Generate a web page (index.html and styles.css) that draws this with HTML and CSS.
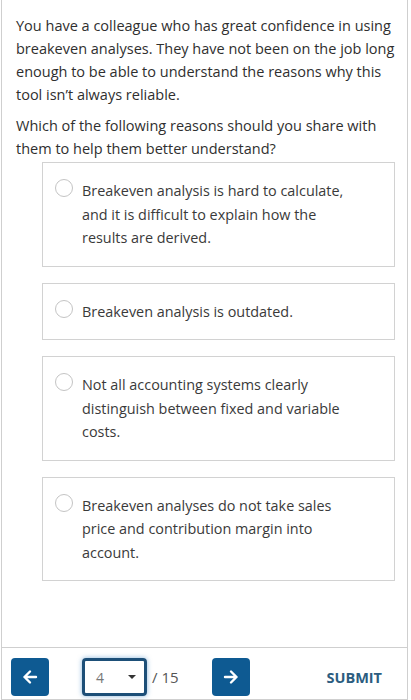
FILE: index.html
```html
<!DOCTYPE html>
<html lang="en">
<head>
    <meta charset="UTF-8">
    <meta name="viewport" content="width=device-width, initial-scale=1.0">
    <title>Question 4</title>
    <link rel="stylesheet" href="styles.css">
</head>
<body>
    <div class="panel">
        <div class="question">
            <p>You have a colleague who has great confidence in using breakeven analyses. They have not been on the job long enough to be able to understand the reasons why this tool isn’t always reliable.</p>
            <p>Which of the following reasons should you share with them to help them better understand?</p>
        </div>

        <div class="options">
            <label class="option">
                <span class="radio"></span>
                <span class="option-text">Breakeven analysis is hard to calculate, and it is difficult to explain how the results are derived.</span>
            </label>
            <label class="option">
                <span class="radio"></span>
                <span class="option-text">Breakeven analysis is outdated.</span>
            </label>
            <label class="option">
                <span class="radio"></span>
                <span class="option-text">Not all accounting systems clearly distinguish between fixed and variable costs.</span>
            </label>
            <label class="option">
                <span class="radio"></span>
                <span class="option-text">Breakeven analyses do not take sales price and contribution margin into account.</span>
            </label>
        </div>

        <div class="footer">
            <button class="nav-btn" aria-label="Previous">
                <svg width="16" height="16" viewBox="0 0 16 16"><path d="M14 8H2.5M8 2.5L2.5 8L8 13.5" fill="none" stroke="#fff" stroke-width="2.4" stroke-linecap="round" stroke-linejoin="round"/></svg>
            </button>
            <div class="pager">
                <div class="select">
                    <span class="select-value">4</span>
                    <span class="caret"></span>
                </div>
                <span class="total">/ 15</span>
            </div>
            <button class="nav-btn" aria-label="Next">
                <svg width="16" height="16" viewBox="0 0 16 16"><path d="M2 8H13.5M8 2.5L13.5 8L8 13.5" fill="none" stroke="#fff" stroke-width="2.4" stroke-linecap="round" stroke-linejoin="round"/></svg>
            </button>
            <button class="submit">SUBMIT</button>
        </div>
    </div>
</body>
</html>
```

FILE: styles.css
```css
* {
    margin: 0;
    padding: 0;
    box-sizing: border-box;
}

body {
    font-family: 'Open Sans', 'Noto Sans', sans-serif;
    background: white;
    color: #333;
}

.panel {
    margin: 0 3px 0 1px;
    border: 1px solid #cfcfcf;
    border-top: none;
    min-height: 700px;
}

.question {
    padding: 14px 8px 0 14px;
}

.question p {
    font-size: 14.5px;
    line-height: 23px;
    color: #2f2f2f;
    margin-bottom: 8px;
}

.question p:last-child {
    margin-bottom: 0;
}

.options {
    display: flex;
    flex-direction: column;
    gap: 16px;
    margin: 2px 12px 0 40px;
    padding-bottom: 66px;
}

.option {
    display: flex;
    align-items: flex-start;
    gap: 9px;
    padding: 16px 40px 16px 12px;
    border: 1px solid #d2d2d2;
}

.radio {
    flex: none;
    width: 18px;
    height: 18px;
    border: 1px solid #c4c4c4;
    border-radius: 50%;
    background: white;
}

.option-text {
    font-size: 14.4px;
    line-height: 23.5px;
    color: #3a3a3a;
}

.footer {
    display: flex;
    align-items: center;
    border-top: 1px solid #cfcfcf;
    padding: 10px 10px 0 9px;
}

.nav-btn {
    width: 38px;
    height: 38px;
    border: none;
    border-radius: 4px;
    background: #0e5a92;
    display: flex;
    align-items: center;
    justify-content: center;
}

.pager {
    display: flex;
    align-items: center;
    gap: 5px;
    margin: 0 33px;
}

.select {
    width: 65px;
    height: 38px;
    border: 3px solid #1d4f78;
    border-radius: 4px;
    box-shadow: 0 0 5px rgba(40, 120, 190, 0.55);
    display: flex;
    align-items: center;
    justify-content: space-between;
    padding: 0 8px 0 11px;
}

.select-value {
    font-size: 14px;
    color: #777;
}

.caret {
    width: 0;
    height: 0;
    border-left: 4px solid transparent;
    border-right: 4px solid transparent;
    border-top: 4px solid #333;
}

.total {
    font-size: 15px;
    color: #555;
}

.submit {
    margin-left: auto;
    margin-right: 15px;
    background: none;
    border: none;
    font-family: 'Open Sans', 'Noto Sans', sans-serif;
    font-weight: 700;
    font-size: 14.5px;
    color: #2c5d80;
}
```
